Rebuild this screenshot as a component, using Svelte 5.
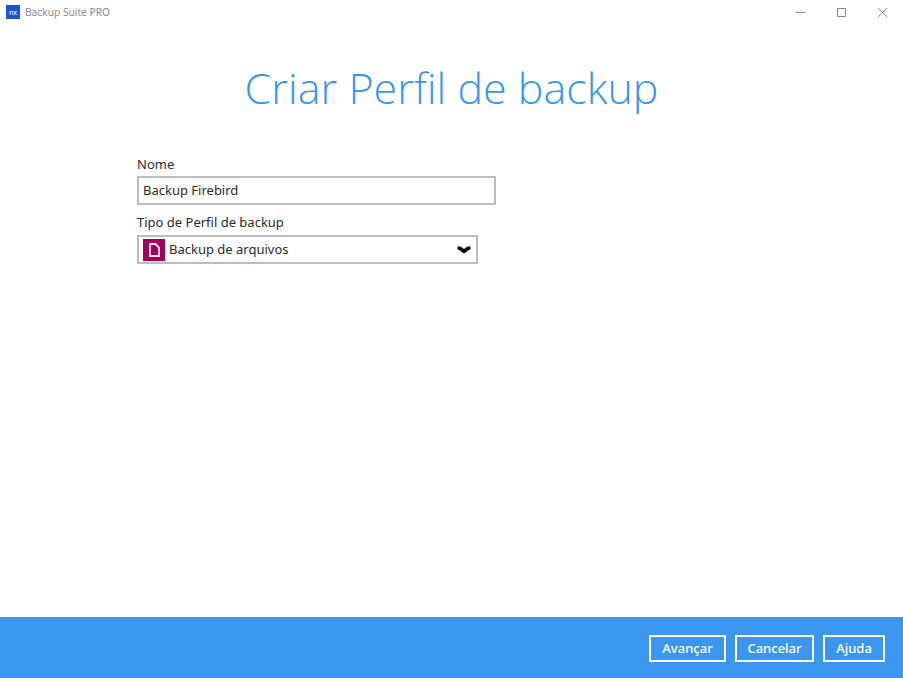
<script lang="ts">
  let name = 'Backup Firebird'
</script>

<div class="window">
  <header class="titlebar">
    <div class="app">
      <span class="logo">nx</span>
      <span class="app-name">Backup Suite PRO</span>
    </div>
    <div class="controls">
      <svg width="11" height="11" viewBox="0 0 11 11"><path d="M0.5 5.5h10" stroke="#8a8a8a" fill="none" /></svg>
      <svg width="11" height="11" viewBox="0 0 11 11"><path d="M1.5 1.5h8v8h-8z" stroke="#8a8a8a" fill="none" /></svg>
      <svg width="11" height="11" viewBox="0 0 11 11"><path d="M1 1l9 9M10 1l-9 9" stroke="#8a8a8a" fill="none" /></svg>
    </div>
  </header>

  <main class="content">
    <h1>Criar Perfil de backup</h1>
    <form class="form">
      <label class="field-label" for="name">Nome</label>
      <input id="name" class="text-input" bind:value={name} />
      <div class="field-label second">Tipo de Perfil de backup</div>
      <div class="select">
        <span class="type-icon">
          <svg width="11" height="14" viewBox="0 0 11 14">
            <path d="M1 1h5.500L10 4.500V13H1z" fill="none" stroke="#fbe4f0" stroke-width="1.8" />
          </svg>
        </span>
        <span class="select-text">Backup de arquivos</span>
        <svg class="chevron" width="14" height="10" viewBox="0 0 14 10">
          <path d="M0.500 1.500h3L7 4l3.500-2.500h3V4L7 8.500 0.500 4z" fill="#000" />
        </svg>
      </div>
    </form>
  </main>

  <footer class="footer">
    <button class="avancar">Avançar</button>
    <button class="cancelar">Cancelar</button>
    <button class="ajuda">Ajuda</button>
  </footer>
</div>

<style>
  :global(body) {
    margin: 0;
    background: #fff;
  }

  .window {
    display: flex;
    flex-direction: column;
    width: 903px;
    height: 678px;
    font-family: 'Noto Sans', 'Open Sans', sans-serif;
    color: #2b2b2b;
  }

  .titlebar {
    display: flex;
    justify-content: space-between;
    align-items: center;
    height: 24px;
    padding-left: 6px;
  }

  .app {
    display: flex;
    align-items: center;
    gap: 5px;
  }

  .logo {
    display: flex;
    align-items: center;
    justify-content: center;
    width: 14px;
    height: 14px;
    background: #1c54d8;
    color: #fff;
    font-size: 7px;
    line-height: 1;
  }

  .app-name {
    font-size: 10.2px;
    color: #8b8b8b;
  }

  .controls {
    display: flex;
    gap: 30px;
    padding-right: 15px;
  }

  .content {
    flex: 1;
  }

  h1 {
    margin: 36px 0 0;
    text-align: center;
    font-weight: 300;
    font-size: 43px;
    line-height: 56px;
    color: #3b96ef;
    font-family: 'Open Sans', 'Noto Sans', sans-serif;
  }

  .form {
    display: flex;
    flex-direction: column;
    align-items: flex-start;
    margin: 39px 0 0 137px;
  }

  .field-label {
    font-size: 13px;
    line-height: 18px;
  }

  .second {
    margin-top: 8px;
  }

  .text-input {
    box-sizing: border-box;
    width: 359px;
    height: 29px;
    margin-top: 3px;
    padding: 0 4px 2px;
    border: 2px solid #bdbdbd;
    font: inherit;
    font-size: 13px;
    color: #2b2b2b;
    outline: none;
  }

  .select {
    box-sizing: border-box;
    display: flex;
    align-items: center;
    width: 341px;
    height: 29px;
    margin-top: 4px;
    padding: 0 5px 0 4px;
    border: 2px solid #bdbdbd;
    font-size: 13px;
  }

  .type-icon {
    display: flex;
    align-items: center;
    justify-content: center;
    width: 22px;
    height: 22px;
    background: #a0005c;
    margin-right: 4px;
  }

  .select-text {
    flex: 1;
    padding-bottom: 2px;
  }

  .footer {
    display: flex;
    justify-content: flex-end;
    align-items: center;
    gap: 9px;
    box-sizing: border-box;
    height: 61px;
    padding: 2px 18px 0 0;
    background: #3b96ef;
  }

  button {
    height: 27px;
    padding: 0 0 1px;
    border: 2px solid #fff;
    background: transparent;
    color: #fff;
    font-family: inherit;
    font-size: 13px;
    font-weight: 500;
  }

  .avancar {
    width: 77px;
  }

  .cancelar {
    width: 79px;
  }

  .ajuda {
    width: 62px;
  }
</style>
